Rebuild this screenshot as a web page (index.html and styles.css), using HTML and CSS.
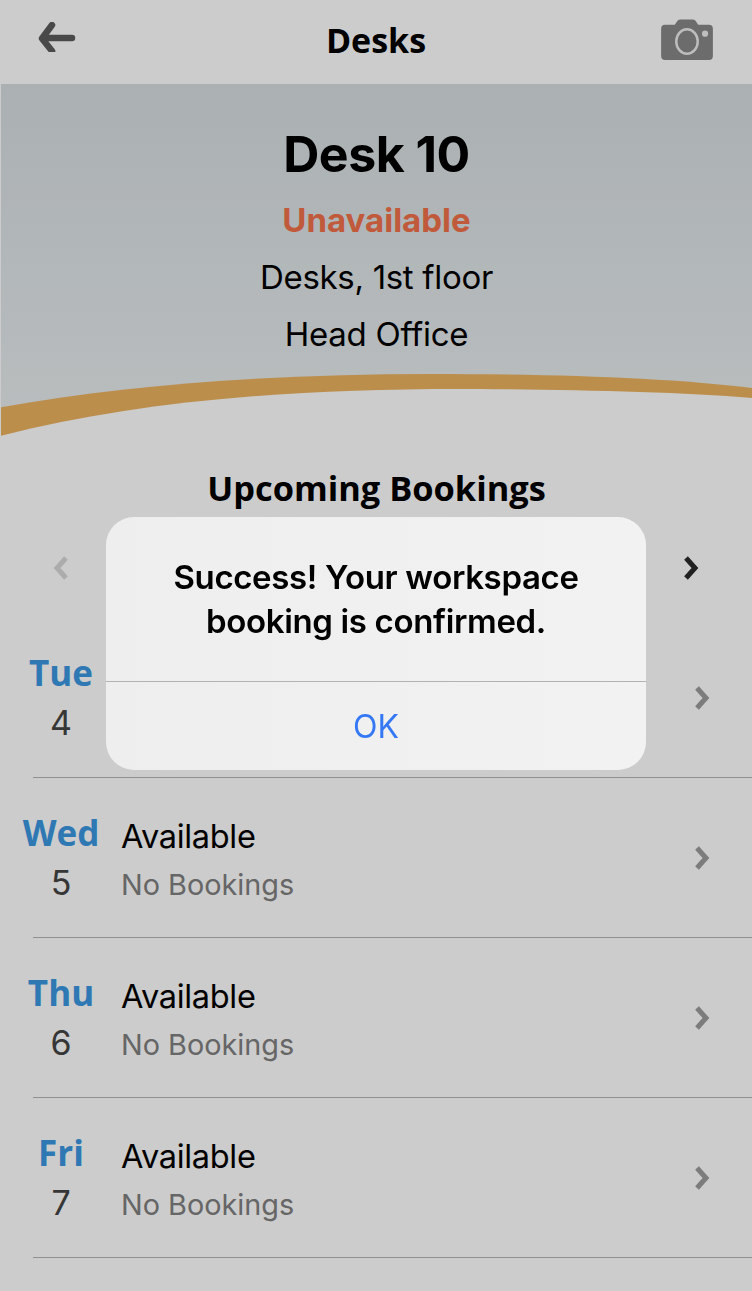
FILE: index.html
```html
<!DOCTYPE html>
<html lang="en">
<head>
  <meta charset="UTF-8" />
  <meta name="viewport" content="width=device-width, initial-scale=1.0" />
  <title>Desks</title>
  <link rel="stylesheet" href="styles.css">
</head>
<body>

  <div class="page">
    <header class="topbar">
      <svg class="back-icon" width="38" height="30" viewBox="0 0 38 30">
        <path d="M14 3 L4 16.5 L14 29 M5 16 H34" fill="none" stroke="#5c5c5c" stroke-width="6.5" stroke-linecap="round" stroke-linejoin="round"/>
      </svg>
      <h1>Desks</h1>
      <svg class="camera-icon" width="52" height="41" viewBox="0 0 53 42">
        <path d="M4 6 H14 L17 1.5 Q18 0.5 20 0.5 H32 Q34 0.5 35 1.5 L38 6 H49 Q53 6 53 10 V38 Q53 42 49 42 H4 Q0 42 0 38 V10 Q0 6 4 6 Z" fill="#888"/>
        <ellipse cx="26.5" cy="23" rx="11" ry="12.5" fill="none" stroke="#fff" stroke-width="2.5" opacity=".85"/>
        <circle cx="45" cy="15" r="3.2" fill="#fff" opacity=".85"/>
      </svg>
    </header>

    <section class="hero">
      <h2>Desk 10</h2>
      <div class="status">Unavailable</div>
      <div class="place">Desks, 1st floor</div>
      <div class="place">Head Office</div>
      <svg class="swoosh" width="752" height="62" viewBox="0 0 752 62">
        <path d="M0 62 V33.5 C130 10 280 0 430 0 C560 0 670 4 752 14 V62 Z" fill="#ecb260"/>
        <path d="M0 62 C140 26 300 14 480 15 C580 16 680 18 752 24 V62 Z" fill="#fff"/>
      </svg>
    </section>

    <h3 class="section-title">Upcoming Bookings</h3>

    <div class="week-nav">
      <svg width="20" height="28" viewBox="0 0 20 28"><path d="M15 4 L6 14 L15 24" fill="none" stroke="#d8d8d8" stroke-width="5"/></svg>
      <svg width="20" height="28" viewBox="0 0 20 28"><path d="M5 4 L14 14 L5 24" fill="none" stroke="#2a2a2a" stroke-width="5"/></svg>
    </div>

    <ul class="days">
      <li class="day-row">
        <div class="day"><span class="day-name">Tue</span><span class="day-num">4</span></div>
        <div class="day-info"><span class="avail">Available</span><span class="bookings">No Bookings</span></div>
        <svg class="row-arrow" width="20" height="28" viewBox="0 0 20 28"><path d="M5 4 L14 14 L5 24" fill="none" stroke="#9c9c9c" stroke-width="5"/></svg>
      </li>
      <li class="day-row">
        <div class="day"><span class="day-name">Wed</span><span class="day-num">5</span></div>
        <div class="day-info"><span class="avail">Available</span><span class="bookings">No Bookings</span></div>
        <svg class="row-arrow" width="20" height="28" viewBox="0 0 20 28"><path d="M5 4 L14 14 L5 24" fill="none" stroke="#9c9c9c" stroke-width="5"/></svg>
      </li>
      <li class="day-row">
        <div class="day"><span class="day-name">Thu</span><span class="day-num">6</span></div>
        <div class="day-info"><span class="avail">Available</span><span class="bookings">No Bookings</span></div>
        <svg class="row-arrow" width="20" height="28" viewBox="0 0 20 28"><path d="M5 4 L14 14 L5 24" fill="none" stroke="#9c9c9c" stroke-width="5"/></svg>
      </li>
      <li class="day-row">
        <div class="day"><span class="day-name">Fri</span><span class="day-num">7</span></div>
        <div class="day-info"><span class="avail">Available</span><span class="bookings">No Bookings</span></div>
        <svg class="row-arrow" width="20" height="28" viewBox="0 0 20 28"><path d="M5 4 L14 14 L5 24" fill="none" stroke="#9c9c9c" stroke-width="5"/></svg>
      </li>
    </ul>
  </div>

  <div class="scrim"></div>

  <div class="alert">
    <p>Success! Your workspace booking is confirmed.</p>
    <button type="button">OK</button>
  </div>

</body>
</html>
```

FILE: styles.css
```css
* {
  box-sizing: border-box;
}

html, body {
  margin: 0;
  height: 1291px;
  overflow: hidden;
  background: #fff;
}

body {
  font-family: Inter, "Liberation Sans", sans-serif;
  color: #000;
}

.page {
  height: 1291px;
  padding: 1px 0 0 1px;
}

.topbar {
  height: 83px;
  display: flex;
  align-items: flex-start;
  justify-content: space-between;
  padding: 21px 39px 0 37px;
  position: relative;
}

.topbar h1 {
  margin: 0;
  font-family: "Open Sans", sans-serif;
  font-size: 34px;
  font-weight: 700;
  line-height: 40px;
  position: absolute;
  left: 0;
  right: 1px;
  top: 19px;
  text-align: center;
}

.camera-icon {
  margin-top: -3px;
}

.hero {
  height: 352px;
  padding-top: 39px;
  text-align: center;
  background: linear-gradient(#d6dde0, #e8edef);
  position: relative;
  overflow: hidden;
}

.hero h2 {
  margin: 0;
  font-size: 50px;
  font-weight: 700;
  line-height: 62px;
  letter-spacing: -.5px;
}

.status {
  margin-top: 10px;
  font-size: 33px;
  font-weight: 700;
  line-height: 50px;
  color: #f1714a;
}

.place {
  font-size: 33px;
  line-height: 57px;
  letter-spacing: -.3px;
}

.status + .place {
  margin-top: 4px;
}

.swoosh {
  position: absolute;
  left: -1px;
  bottom: 0;
}

.section-title {
  margin: 0;
  height: 62px;
  padding-top: 29px;
  font-family: "Open Sans", sans-serif;
  font-size: 34.4px;
  font-weight: 700;
  line-height: 46px;
  text-align: center;
}

.week-nav {
  height: 120px;
  display: flex;
  justify-content: space-between;
  align-items: flex-start;
  padding: 56px 51px 0 50px;
}

.days {
  list-style: none;
  margin: 0;
  padding: 0 0 0 32px;
}

.day-row {
  height: 160px;
  display: flex;
  align-items: center;
  border-bottom: 1px solid #b4b4b4;
  position: relative;
}

.day {
  position: absolute;
  left: -32px;
  top: 31px;
  width: 120px;
  display: flex;
  flex-direction: column;
  align-items: center;
}

.day-name {
  font-family: "Open Sans", sans-serif;
  font-size: 35px;
  font-weight: 700;
  line-height: 48px;
  color: #3a96e2;
}

.day-num {
  margin-top: 2px;
  font-size: 34px;
  line-height: 48px;
  color: #444;
}

.day-info {
  margin-left: 88px;
  margin-top: 6px;
  display: flex;
  flex-direction: column;
}

.avail {
  font-size: 32.5px;
  line-height: 48px;
  letter-spacing: -.3px;
}

.bookings {
  font-size: 28.8px;
  line-height: 47px;
  color: #808080;
}

.row-arrow {
  margin-left: auto;
  margin-right: 40px;
}

.scrim {
  position: fixed;
  inset: 0;
  background: rgba(0, 0, 0, .2);
}

.alert {
  position: absolute;
  left: 106px;
  top: 517px;
  width: 540px;
  height: 253px;
  border-radius: 28px;
  background: linear-gradient(90deg, #eee, #f2f2f2);
  text-align: center;
  overflow: hidden;
}

.alert p {
  margin: 0;
  height: 165px;
  padding: 38px 40px 0;
  font-size: 33px;
  font-weight: 600;
  line-height: 44px;
  letter-spacing: -.35px;
  border-bottom: 1px solid #b2b2b2;
}

.alert button {
  display: block;
  width: 100%;
  height: 88px;
  padding: 0;
  border: 0;
  background: none;
  font-family: inherit;
  font-size: 32px;
  color: #3478f6;
}
```
